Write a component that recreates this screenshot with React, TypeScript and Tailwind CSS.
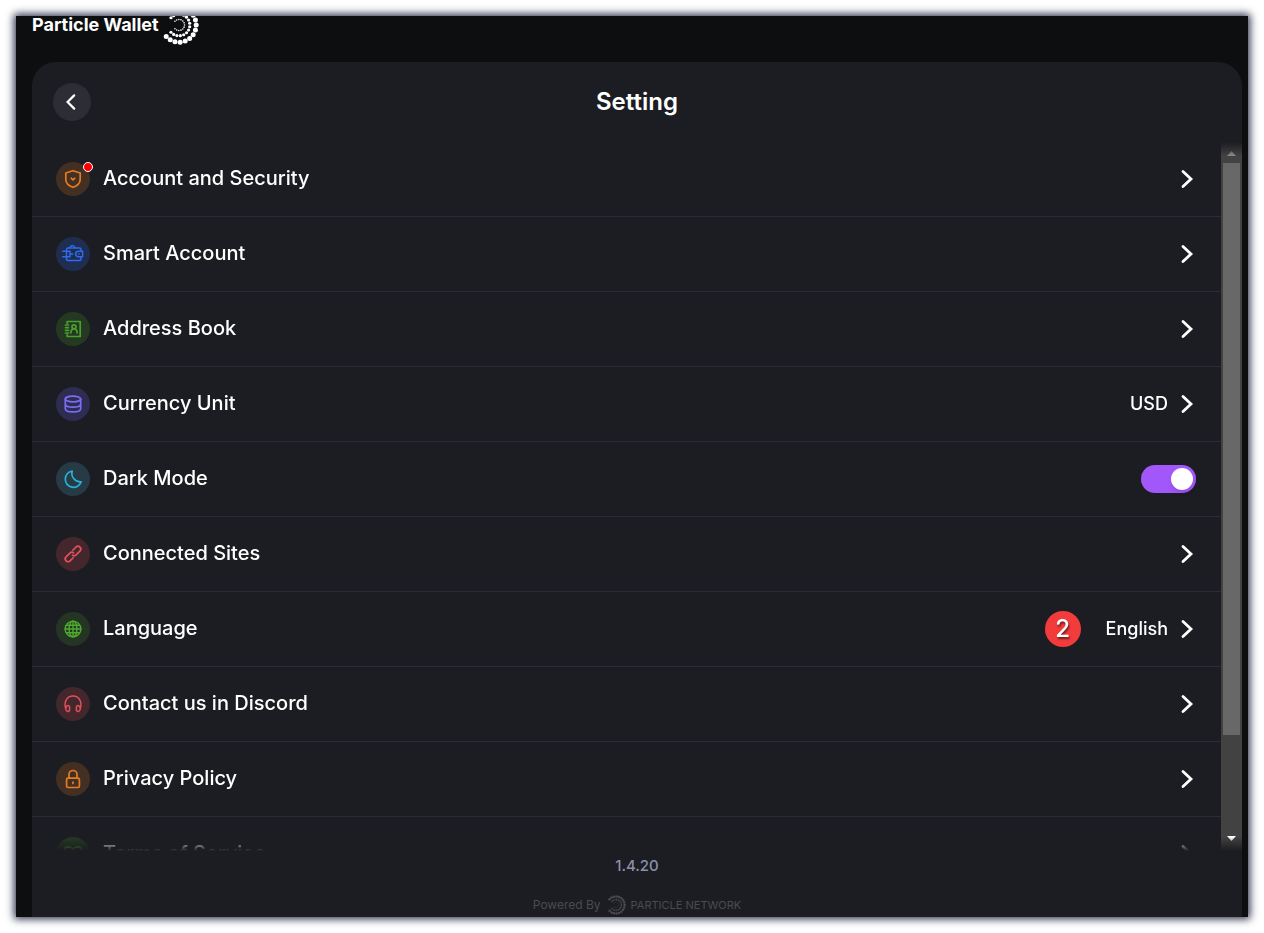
import React from "react";

const ring = (r: number, dot: number, count: number, sweep = 138) =>
  Array.from({ length: count }, (_, i) => {
    const a = ((-sweep + (2 * sweep * i) / (count - 1)) * Math.PI) / 180;
    return <circle key={`${r}-${i}`} cx={20 + r * Math.cos(a)} cy={20 + r * Math.sin(a)} r={dot} />;
  });

function ParticleMark({ className }: { className: string }) {
  return (
    <svg viewBox="0 0 40 40" fill="currentColor" className={className} aria-hidden="true">
      {ring(17.2, 2.5, 17)}
      {ring(10.8, 1.6, 16)}
      {ring(5.5, 0.8, 13)}
    </svg>
  );
}

function Glyph({ children }: { children: React.ReactNode }) {
  return (
    <svg
      viewBox="0 0 20 20"
      fill="none"
      stroke="currentColor"
      strokeWidth="1.7"
      strokeLinecap="round"
      strokeLinejoin="round"
      className="size-5 overflow-visible"
      aria-hidden="true"
    >
      {children}
    </svg>
  );
}

function Chevron() {
  return (
    <svg viewBox="1 0 15 20" className="h-5 w-[15px]" fill="none" stroke="currentColor" strokeWidth="2.8" strokeLinecap="round" aria-hidden="true">
      <path d="M3 2.5 11 10 3 17.5" />
    </svg>
  );
}

type Item = { label: string; tone: string; icon: React.ReactNode; value?: string; alert?: boolean; badge?: string; toggle?: boolean };

const items: Item[] = [
  {
    label: "Account and Security",
    tone: "bg-[#443023] text-[#e27d26]",
    alert: true,
    icon: (
      <>
        <path d="M10 1.7 17.2 4v6.200c0 3.600-3 6.600-7.200 8.100-4.200-1.500-7.200-4.500-7.200-8.100V4Z" />
        <path d="m8.300 9.300 1.700 1.500 1.700-1.500" strokeWidth="1.800" />
      </>
    ),
  },
  {
    label: "Smart Account",
    tone: "bg-[#1f2d50] text-[#2e6bf0]",
    icon: (
      <g strokeWidth="1.5">
        <path d="M3.500 7V5.500a1.500 1.500 0 0 1 1.500-1.500H16.500a1.500 1.500 0 0 1 1.500 1.500V7M18 13v2a1.500 1.500 0 0 1-1.500 1.500H5A1.500 1.500 0 0 1 3.500 15v-2" />
        <path d="M6.500 3.700 8.400 1.800a1.300 1.300 0 0 1 1.900 0L12.200 3.700" />
        <path d="M-.3 7.200H7v5.600H-.3M3.500 7.200v5.600M8.200 10h1.600" />
        <path d="M19.600 7.300h-4.200a2.700 2.700 0 0 0 0 5.400h4.200ZM15.800 10h.4" />
      </g>
    ),
  },
  {
    label: "Address Book",
    tone: "bg-[#253922] text-[#48a02e]",
    icon: (
      <>
        <path d="M4.200 4.200V2.500h13v15h-13v-1.700M2.500 6h3M2.500 8.700h3M2.500 11.300h3M2.500 14h3" />
        <circle cx="11" cy="7.800" r="2" />
        <path d="M7.900 13.800c0-5.200 6.200-5.200 6.200 0" />
      </>
    ),
  },
  {
    label: "Currency Unit",
    tone: "bg-[#2f2c51] text-[#7c6cf5]",
    value: "USD",
    icon: (
      <>
        <ellipse cx="10" cy="5" rx="7.700" ry="2.900" />
        <path d="M2.300 5v9.800c0 4.200 15.400 4.200 15.400 0V5M2.300 9.900c0 4.200 15.400 4.200 15.400 0" />
      </>
    ),
  },
  { label: "Dark Mode", tone: "bg-[#263b45] text-[#29b0d3]", toggle: true, icon: <path d="M9.200 2A8.200 8.200 0 1 0 18.200 12.800 8.500 8.500 0 0 1 9.200 2Z" /> },
  {
    label: "Connected Sites",
    tone: "bg-[#44272c] text-[#e0515c]",
    icon: (
      <g transform="rotate(-45 10 10)">
        <path d="M12.500 7.200H17a2.800 2.800 0 0 1 0 5.600H11.500a2.800 2.800 0 0 1-2.700-2.300" />
        <path d="M7.500 12.800H3a2.800 2.800 0 0 1 0-5.600H8.500a2.800 2.800 0 0 1 2.700 2.300" />
      </g>
    ),
  },
  {
    label: "Language",
    tone: "bg-[#253524] text-[#4dab30]",
    badge: "2",
    value: "English",
    icon: (
      <g strokeWidth="1.4">
        <circle cx="10" cy="10" r="7.900" />
        <ellipse cx="10" cy="10" rx="3.900" ry="7.900" />
        <path d="M10 2.100v15.800M2.100 10h15.800M3.400 6.300h13.200M3.400 13.700h13.200" />
      </g>
    ),
  },
  {
    label: "Contact us in Discord",
    tone: "bg-[#44272c] text-[#e0515c]",
    icon: (
      <g strokeWidth="1.5">
        <path d="M2.600 14C.8 7.500 4 2 10 2S19.200 7.500 17.400 14" />
        <path d="M6.600 12.800v3.400c-.7 2-3.500 1.600-3.900-1.200-.3-3 2.800-4.800 3.900-2.200ZM13.400 12.800v3.400c.7 2 3.500 1.600 3.900-1.200.3-3-2.800-4.800-3.900-2.200Z" />
      </g>
    ),
  },
  {
    label: "Privacy Policy",
    tone: "bg-[#443023] text-[#e27d26]",
    icon: (
      <>
        <rect x="3.600" y="9.200" width="12.800" height="9.300" rx="1.500" />
        <path d="M6 9V5.500a4 4 0 0 1 8 0V9M10 13v1.500" />
      </>
    ),
  },
  {
    label: "Terms of Service",
    tone: "bg-[#253922] text-[#48a02e]",
    icon: <path d="M10 5C8 2.500 4.500 2.500 2 4v12c2.500-1.500 6-1.500 8 1 2-2.500 5.500-2.500 8-1V4c-2.500-1.500-6-1.500-8 1Zm0 0v12" />,
  },
];

function Row({ item }: { item: Item }) {
  const lead = (
    <>
      <span className={`relative flex size-[34px] shrink-0 items-center justify-center rounded-full ${item.tone}`}>
        <Glyph>{item.icon}</Glyph>
        {item.alert && <span className="absolute top-0 -right-[3px] size-2.5 rounded-full border border-white bg-[#ff0000]" />}
      </span>
      <span className="flex-1 pb-0.5 text-left text-xl font-medium">{item.label}</span>
    </>
  );
  const shell = "flex h-[75px] w-full items-center gap-[13px] border-b border-[#2c2c37] pr-[25px] pl-6";
  if (item.toggle) {
    return (
      <label className={shell}>
        {lead}
        <input type="checkbox" defaultChecked className="peer sr-only" />
        <span className="flex h-7 w-[55px] items-center justify-start rounded-full bg-[#4b4b55] px-[3px] peer-checked:justify-end peer-checked:bg-[#a257fb]">
          <span className="size-[22px] rounded-full bg-white shadow-md" />
        </span>
      </label>
    );
  }
  return (
    <button type="button" className={shell}>
      {lead}
      {item.badge && (
        <span className="mr-3 flex size-9 items-center justify-center rounded-full bg-[#f23b3b] text-2xl font-medium [text-shadow:1px_2px_2px_#0008]">
          {item.badge}
        </span>
      )}
      {item.value && <span className="text-lg font-medium">{item.value}</span>}
      <Chevron />
    </button>
  );
}

export default function App() {
  return (
    <div className="h-screen bg-white p-4 font-['Inter',sans-serif] text-white">
      <div className="flex h-full flex-col overflow-hidden bg-[#0d0e10] pr-1.5 pl-4 shadow-[0_0_8px_2px_#2a3048]">
        <header className="flex h-[46px] shrink-0 items-start">
          <span className="-mt-[5px] text-lg font-bold">Particle Wallet</span>
          <ParticleMark className="-mt-[11px] size-10" />
        </header>
        <main className="flex min-h-0 flex-1 flex-col rounded-t-3xl bg-[#1c1d22]">
          <div className="grid h-20 shrink-0 grid-cols-[38px_1fr_38px] items-center px-[21px]">
            <button type="button" aria-label="Back" className="flex size-[38px] items-center justify-center rounded-full bg-[#2d2d35]">
              <svg viewBox="0 0 20 20" className="size-5" fill="none" stroke="currentColor" strokeWidth="2.200" strokeLinecap="round" aria-hidden="true">
                <path d="M12.200 3.400 5.600 10l6.600 6.600" />
              </svg>
            </button>
            <h1 className="text-center text-2xl font-semibold">Setting</h1>
          </div>
          <div className="flex min-h-0 flex-1 [mask-image:linear-gradient(to_bottom,transparent,#000_14px,#000_calc(100%-14px),transparent)]">
            <div className="min-w-0 flex-1 overflow-y-auto [scrollbar-width:none]">
              {items.map((item) => (
                <Row key={item.label} item={item} />
              ))}
            </div>
            <div className="flex w-[21px] flex-col items-center bg-[#424242]" aria-hidden="true">
              <svg viewBox="0 0 21 21" className="size-[21px] shrink-0" fill="#8b8b8b">
                <path d="M6 14h9L10.500 9Z" />
              </svg>
              <div className="h-[572px] w-[17px] bg-[#686868]" />
              <div className="flex-1" />
              <svg viewBox="0 0 21 23" className="h-[23px] w-[21px] shrink-0" fill="#fff">
                <path d="M6 8h9l-4.500 5Z" />
              </svg>
            </div>
          </div>
          <footer className="flex h-[66px] shrink-0 flex-col items-center">
            <p className="mt-[5px] text-[15px] leading-5 font-medium text-[#8d8fa8]">1.4.20</p>
            <p className="mt-[19px] flex items-center gap-[5px] leading-5 text-[#4b4b4e]">
              <span className="text-xs">Powered By</span>
              <ParticleMark className="size-5" />
              <span className="text-[11px]">PARTICLE NETWORK</span>
            </p>
          </footer>
        </main>
      </div>
    </div>
  );
}
